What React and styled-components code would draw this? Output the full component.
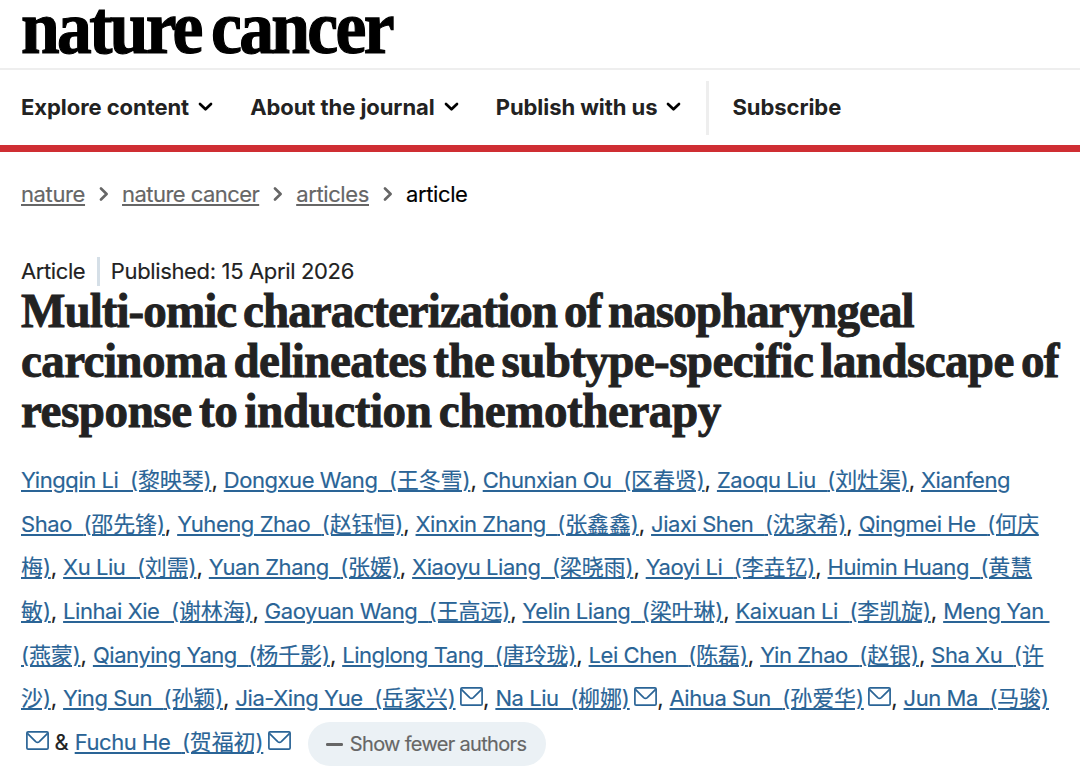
import React from 'react'
import styled, { createGlobalStyle } from 'styled-components'


const GlobalStyle = createGlobalStyle`
    * {
        box-sizing: border-box;
    }
    body {
        margin: 0;
        background: #fff;
        color: #222;
        font-family: Inter, "Noto Sans CJK SC", sans-serif;
        font-size: 22px;
    }
`
const Page = styled.div`
    width: 1080px;
    height: 776px;
`
const LogoBar = styled.div`
    height: 70px;
    padding-left: 21px;
    border-bottom: 2px solid #eee;
`
const Logo = styled.div`
    width: max-content;
    font-family: "Liberation Serif", serif;
    font-weight: 700;
    font-size: 76px;
    line-height: 54px;
    letter-spacing: -2.9px;
    word-spacing: -5px;
    color: #000;
    -webkit-text-stroke: 1.2px #000;
    transform-origin: 0 50%;
    transform: scaleX(0.915);
`
const Nav = styled.nav`
    display: flex;
    align-items: center;
    height: 82px;
    padding: 0 0 1px 21px;
    border-bottom: 7px solid #cf2e33;
`
const NavItem = styled.a`
    display: flex;
    align-items: center;
    gap: 9px;
    margin-right: 37px;
    font-weight: 700;
    letter-spacing: -0.06px;
    white-space: nowrap;
`
const NavDivider = styled.div`
    width: 3px;
    height: 54px;
    margin: 1px 23px 0 -12px;
    background: #eee;
`
const Crumbs = styled.div`
    display: flex;
    align-items: center;
    height: 30px;
    margin: 27px 0 0 21px;
    line-height: 30px;
    -webkit-text-stroke: 0.15px;
`
const Crumb = styled.a`
    color: ${(p) => (p.$current ? '#000' : '#666')};
    text-decoration: ${(p) => (p.$current ? 'none' : 'underline')};
    text-decoration-thickness: 1.5px;
    text-underline-offset: 2px;
    letter-spacing: ${(p) => p.$spacing || -0.38}px;
`
const Separator = styled.svg`
    margin: 0 13.5px 0 13.5px;
`
const Meta = styled.div`
    display: flex;
    align-items: center;
    height: 30px;
    margin: 47px 0 0 21px;
    letter-spacing: -0.4px;
    -webkit-text-stroke: 0.15px;
`
const Published = styled.span`
    margin-left: 11.5px;
    padding-left: 11px;
    border-left: 3px solid #d5dfe7;
    line-height: 29px;
    letter-spacing: -0.35px;
`
const Title = styled.h1`
    margin: 0 0 0 21px;
    font-family: "Liberation Serif", serif;
    font-weight: 700;
    font-size: 47.5px;
    line-height: 50px;
    -webkit-text-stroke: 0.9px #222;
`
const TitleLine = styled.span`
    display: block;
    width: max-content;
    white-space: nowrap;
    letter-spacing: ${(p) => p.$spacing}px;
    word-spacing: -4px;
    transform-origin: 0 50%;
    transform: scaleX(0.99);
`
const Authors = styled.div`
    margin: 23px 0 0 21px;
`
const AuthorLine = styled.div`
    height: 43.7px;
    line-height: 43.7px;
    white-space: pre;
    letter-spacing: -0.12px;
    -webkit-text-stroke: 0.15px;
`
const Author = styled.a`
    color: #2a6496;
    text-decoration: underline;
    text-decoration-thickness: 1.5px;
    text-underline-offset: 2px;
`
const Latin = styled.span`
    letter-spacing: -0.44px;
`
const Mail = styled.svg`
    margin: 0 0 0 4.5px;
    vertical-align: 0;
`
const FewerButton = styled.button`
    display: inline-flex;
    align-items: center;
    gap: 7px;
    height: 44px;
    margin-left: 17px;
    padding: 0 20px 0 18px;
    border: 0;
    border-radius: 22px;
    background: #ebf1f5;
    color: #666;
    font-family: inherit;
    font-size: 20px;
    letter-spacing: -0.68px;
    vertical-align: middle;
    -webkit-text-stroke: 0.15px;
`

const ChevronDown = () => (
    <svg width="15" height="10" viewBox="0 0 15 10" fill="none">
        <path d="M2 2l5.5 5.3L13 2" stroke="#000" strokeWidth="2.7" strokeLinecap="round" strokeLinejoin="round" />
    </svg>
)

const ChevronRight = () => (
    <Separator width="10" height="14" viewBox="0 0 10 14" fill="none">
        <path d="M2 1.5l5.6 5.5L2 12.5" stroke="#666" strokeWidth="2.6" strokeLinecap="round" strokeLinejoin="round" />
    </Separator>
)

const MailIcon = () => (
    <Mail width="23" height="19" viewBox="0 0 23 19" fill="none" stroke="#2a6496" strokeWidth="1.7" strokeLinejoin="round">
        <rect x="0.9" y="0.9" width="21.2" height="17.2" rx="1.2" />
        <path d="M1.4 2.4l8.3 8.2q1.8 1.5 3.6 0l8.3-8.2" />
    </Mail>
)

// [latin name, chinese name, text after the link, has mail icon]
const authorLines = [
    [['Yingqin Li  ', '(黎映琴)', ', '], ['Dongxue Wang  ', '(王冬雪)', ', '], ['Chunxian Ou  ', '(区春贤)', ', '], ['Zaoqu Liu  ', '(刘灶渠)', ', '], ['Xianfeng', '', '']],
    [['Shao  ', '(邵先锋)', ', '], ['Yuheng Zhao  ', '(赵钰恒)', ', '], ['Xinxin Zhang  ', '(张鑫鑫)', ', '], ['Jiaxi Shen  ', '(沈家希)', ', '], ['Qingmei He  ', '(何庆', '']],
    [['', '梅)', ', '], ['Xu Liu  ', '(刘需)', ', '], ['Yuan Zhang  ', '(张媛)', ', '], ['Xiaoyu Liang  ', '(梁晓雨)', ', '], ['Yaoyi Li  ', '(李垚钇)', ', '], ['Huimin Huang  ', '(黄慧', '']],
    [['', '敏)', ', '], ['Linhai Xie  ', '(谢林海)', ', '], ['Gaoyuan Wang  ', '(王高远)', ', '], ['Yelin Liang  ', '(梁叶琳)', ', '], ['Kaixuan Li  ', '(李凯旋)', ', '], ['Meng Yan ', '', '']],
    [['', '(燕蒙)', ', '], ['Qianying Yang  ', '(杨千影)', ', '], ['Linglong Tang  ', '(唐玲珑)', ', '], ['Lei Chen  ', '(陈磊)', ', '], ['Yin Zhao  ', '(赵银)', ', '], ['Sha Xu  ', '(许', '']],
    [['', '沙)', ', '], ['Ying Sun  ', '(孙颖)', ', '], ['Jia-Xing Yue  ', '(岳家兴)', ', ', true], ['Na Liu  ', '(柳娜)', ', ', true], ['Aihua Sun  ', '(孙爱华)', ', ', true], ['Jun Ma  ', '(马骏)', '']],
    [['', '', ' & ', true], ['Fuchu He  ', '(贺福初)', '', true]],
]

export default function App() {
  return (
    <>
        <GlobalStyle />
        <Page>
            <LogoBar>
                <Logo>nature cancer</Logo>
            </LogoBar>

            <Nav>
                <NavItem>Explore content<ChevronDown /></NavItem>
                <NavItem>About the journal<ChevronDown /></NavItem>
                <NavItem>Publish with us<ChevronDown /></NavItem>
                <NavDivider />
                <NavItem>Subscribe</NavItem>
            </Nav>

            <Crumbs>
                <Crumb>nature</Crumb>
                <ChevronRight />
                <Crumb $spacing={-0.55}>nature cancer</Crumb>
                <ChevronRight />
                <Crumb>articles</Crumb>
                <ChevronRight />
                <Crumb $current>article</Crumb>
            </Crumbs>

            <Meta>
                <span>Article</span>
                <Published>Published: 15 April 2026</Published>
            </Meta>

            <Title>
                <TitleLine $spacing={-0.95}>Multi-omic characterization of nasopharyngeal</TitleLine>
                <TitleLine $spacing={-0.6}>carcinoma delineates the subtype-specific landscape of</TitleLine>
                <TitleLine $spacing={-0.45}>response to induction chemotherapy</TitleLine>
            </Title>

            <Authors>
                {authorLines.map((line, i) => (
                    <AuthorLine key={i}>
                        {line.map(([latin, chinese, after, mail]) => (
                            <React.Fragment key={latin + chinese}>
                                {(latin || chinese) && <Author><Latin>{latin}</Latin>{chinese}</Author>}
                                {mail && <MailIcon />}
                                {after}
                            </React.Fragment>
                        ))}
                        {i === authorLines.length - 1 && (
                            <FewerButton>
                                <svg width="17" height="3"><rect width="17" height="3" rx="1.2" fill="#666" /></svg>
                                Show fewer authors
                            </FewerButton>
                        )}
                    </AuthorLine>
                ))}
            </Authors>
        </Page>
    </>
  )
}
